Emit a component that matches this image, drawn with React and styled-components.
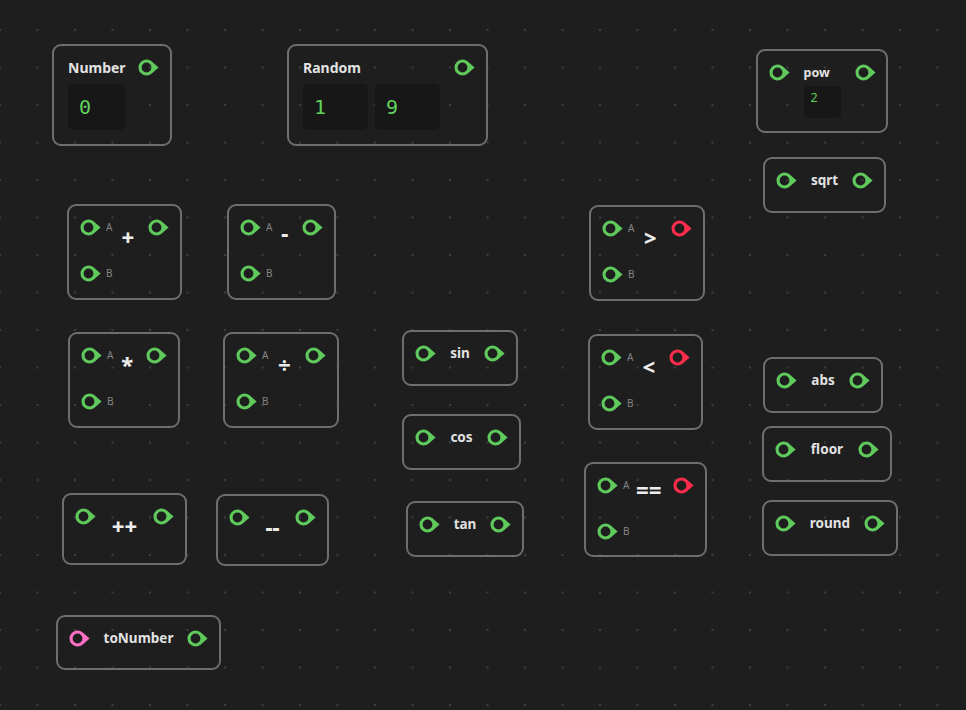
import React from 'react';
import styled, { createGlobalStyle } from 'styled-components';

const GlobalStyle = createGlobalStyle`
  html, body {
    margin: 0;
    padding: 0;
    background: #1e1e1e;
  }
  body {
    font-family: 'Noto Sans', 'Open Sans', sans-serif;
  }
`;

const PORT_COLORS = {
  num: '#5fc95c',
  bool: '#ff2d4b',
  any: '#ff6ec4',
};

const Canvas = styled.div`
  position: relative;
  width: 966px;
  height: 710px;
  overflow: hidden;
  background-color: #1e1e1e;
  background-image: radial-gradient(circle, #3d3d3d 0, #3d3d3d 1px, transparent 1.6px);
  background-size: 37.5px 37.5px;
  background-position: -18.75px 11.25px;
`;

const Node = styled.div`
  position: absolute;
  left: ${(p) => p.$x}px;
  top: ${(p) => p.$y}px;
  width: ${(p) => p.$w}px;
  height: ${(p) => p.$h}px;
  box-sizing: border-box;
  border: 2px solid #6e6e6e;
  border-radius: 9px;
  padding: 13px ${(p) => p.$pr ?? 11}px 0 ${(p) => p.$pl ?? 11}px;
  display: flex;
  flex-direction: ${(p) => (p.$column ? 'column' : 'row')};
  align-items: ${(p) => (p.$column ? 'stretch' : 'flex-start')};
`;

const SocketSvg = styled.svg`
  flex: none;
  display: block;
  width: 21px;
  height: 17px;
  color: ${(p) => PORT_COLORS[p.$type]};
`;

function Socket({ type = 'num' }) {
  return (
    <SocketSvg $type={type} viewBox="0 0 21 17">
      <path
        fill="currentColor"
        fillRule="evenodd"
        d="M13.83 2.54 L20.6 8.5 L13.83 14.46 A8 8 0 1 1 13.83 2.54 Z M8.5 3.6 A4.9 4.9 0 1 0 8.5 13.4 A4.9 4.9 0 1 0 8.5 3.6 Z"
      />
    </SocketSvg>
  );
}

const Label = styled.span`
  flex: 1;
  text-align: center;
  font-size: 13.5px;
  font-weight: 700;
  line-height: 17px;
  color: #e2e2e2;
  white-space: nowrap;
`;

const Header = styled.div`
  display: flex;
  align-items: center;
  height: 17px;
`;

const Title = styled.span`
  flex: 1;
  font-size: 14px;
  font-weight: 700;
  line-height: 17px;
  color: #e2e2e2;
`;

const Fields = styled.div`
  display: flex;
  gap: 7px;
  margin-top: 8px;
`;

const Field = styled.div`
  width: ${(p) => p.$w}px;
  height: 46px;
  box-sizing: border-box;
  padding-left: 11px;
  border-radius: 5px;
  background: #171717;
  font-family: 'DejaVu Sans Mono', 'Liberation Mono', monospace;
  font-size: 20px;
  line-height: 46px;
  color: #62d35f;
`;

const Middle = styled.div`
  flex: 1;
  display: flex;
  justify-content: center;
`;

const Stack = styled.div`
  display: flex;
  flex-direction: column;
`;

const SmallLabel = styled.span`
  font-size: 12.5px;
  font-weight: 700;
  line-height: 17px;
  color: #e2e2e2;
`;

const SmallField = styled.div`
  width: 37px;
  height: 32px;
  box-sizing: border-box;
  margin-top: 5px;
  padding: 4px 7px;
  border-radius: 4px;
  background: #171717;
  font-size: 12.5px;
  line-height: 16px;
  color: #62d35f;
`;

const Inputs = styled.div`
  display: flex;
  flex-direction: column;
  gap: 29px;
`;

const Port = styled.div`
  display: flex;
  align-items: center;
  gap: 5px;
`;

const PortLabel = styled.span`
  font-size: 10px;
  line-height: 17px;
  color: #858585;
`;

const Operator = styled.span`
  flex: 1;
  text-align: center;
  padding-right: ${(p) => p.$shift ?? 0}px;
  margin-top: ${(p) => 6 + (p.$dy ?? 0)}px;
  font-size: 22px;
  font-weight: 800;
  line-height: 22px;
  color: #ececec;
  white-space: nowrap;
`;

function UnaryNode({ x, y, w, h = 56, label, input = 'num', output = 'num' }) {
  return (
    <Node $x={x} $y={y} $w={w} $h={h}>
      <Socket type={input} />
      <Label>{label}</Label>
      <Socket type={output} />
    </Node>
  );
}

function BinaryNode({ x, y, w, h = 96, op, output = 'num', dy }) {
  return (
    <Node $x={x} $y={y} $w={w} $h={h}>
      <Inputs>
        <Port>
          <Socket />
          <PortLabel>A</PortLabel>
        </Port>
        <Port>
          <Socket />
          <PortLabel>B</PortLabel>
        </Port>
      </Inputs>
      <Operator $shift={5} $dy={dy}>{op}</Operator>
      <Socket type={output} />
    </Node>
  );
}

function StepNode({ x, y, w, op }) {
  return (
    <Node $x={x} $y={y} $w={w} $h={72}>
      <Socket />
      <Operator>{op}</Operator>
      <Socket />
    </Node>
  );
}

function ValueNode({ x, y, w, title, values, fieldWidth }) {
  return (
    <Node $x={x} $y={y} $w={w} $h={102} $pl={14} $column>
      <Header>
        <Title>{title}</Title>
        <Socket />
      </Header>
      <Fields>
        {values.map((v, i) => (
          <Field key={i} $w={fieldWidth}>
            {v}
          </Field>
        ))}
      </Fields>
    </Node>
  );
}

function PowNode({ x, y }) {
  return (
    <Node $x={x} $y={y} $w={132} $h={84} $pl={10.5} $pr={10.5}>
      <Socket />
      <Middle>
        <Stack>
          <SmallLabel>pow</SmallLabel>
          <SmallField>2</SmallField>
        </Stack>
      </Middle>
      <Socket />
    </Node>
  );
}

const binaryNodes = [
  { x: 67, y: 204, w: 115, op: '+' },
  { x: 227, y: 204, w: 109, op: '-', dy: -4 },
  { x: 589, y: 205, w: 116, op: '>', output: 'bool' },
  { x: 68, y: 332, w: 112, op: '*' },
  { x: 223, y: 332, w: 116, op: '÷' },
  { x: 588, y: 334, w: 115, op: '<', output: 'bool' },
  { x: 584, y: 462, w: 123, h: 95, op: '==', output: 'bool', dy: -5 },
];

const unaryNodes = [
  { x: 763, y: 157, w: 123, label: 'sqrt' },
  { x: 402, y: 330, w: 116, label: 'sin' },
  { x: 763, y: 357, w: 120, label: 'abs' },
  { x: 402, y: 414, w: 119, label: 'cos' },
  { x: 762, y: 426, w: 130, label: 'floor' },
  { x: 406, y: 501, w: 118, label: 'tan' },
  { x: 762, y: 500, w: 136, label: 'round' },
  { x: 56, y: 615, w: 165, h: 55, label: 'toNumber', input: 'any' },
];

export default function App() {
  return (
    <>
      <GlobalStyle />
      <Canvas>
        <ValueNode x={52} y={44} w={120} title="Number" values={['0']} fieldWidth={57} />
        <ValueNode x={287} y={44} w={201} title="Random" values={['1', '9']} fieldWidth={65} />
        <PowNode x={756} y={49} />
        {binaryNodes.map((n) => (
          <BinaryNode key={n.op} {...n} />
        ))}
        <StepNode x={62} y={493} w={125} op="++" />
        <StepNode x={216} y={494} w={113} op="--" />
        {unaryNodes.map((n) => (
          <UnaryNode key={n.label} {...n} />
        ))}
      </Canvas>
    </>
  );
}
